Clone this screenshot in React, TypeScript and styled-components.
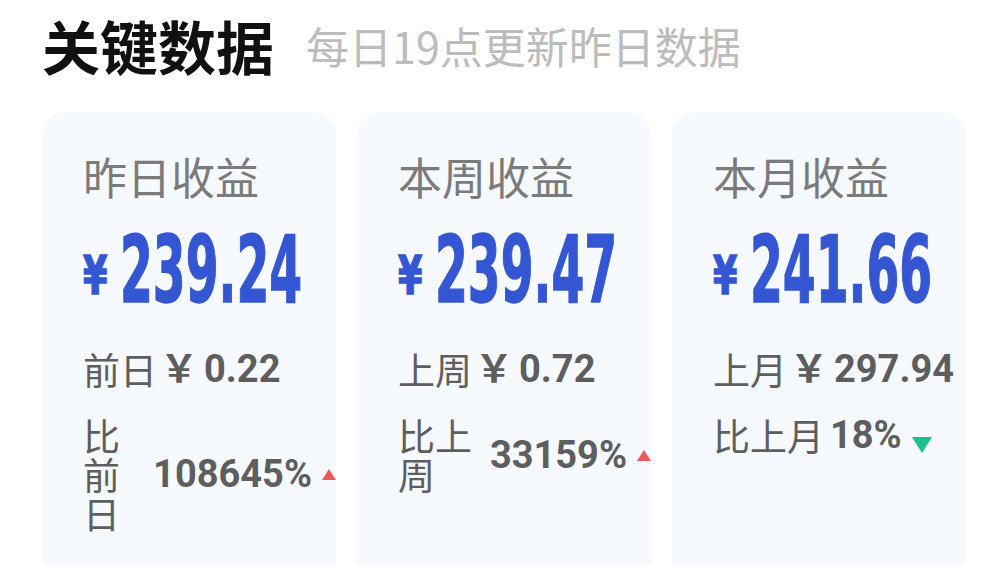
import React from 'react';
import styled, { createGlobalStyle } from 'styled-components';

const GlobalStyle = createGlobalStyle`
    html, body {
        margin: 0;
        padding: 0;
        background: #ffffff;
        overflow: hidden;
    }
    body {
        font-family: Roboto, "Noto Sans CJK SC", sans-serif;
    }
`;

const Page = styled.div`
    width: 1008px;
    height: 565px;
    padding: 10px 42px 0 42px;
    box-sizing: border-box;
    overflow: hidden;
`;

// Header
const Header = styled.div`
    display: flex;
    align-items: center;
    height: 70px;
    gap: 32px;
`;

const Title = styled.h1`
    margin: 0;
    font-family: "Noto Sans CJK SC", sans-serif;
    font-size: 58px;
    font-weight: 700;
    color: #111111;
    line-height: 70px;
`;

const Subtitle = styled.span`
    font-family: "Noto Sans CJK SC", sans-serif;
    font-size: 43px;
    font-weight: 400;
    color: #bcbcbc;
    line-height: 70px;
`;

// Cards
const CardRow = styled.div`
    display: grid;
    grid-template-columns: repeat(3, 294px);
    gap: 21px;
    margin-top: 32px;
`;

const Card = styled.div`
    height: 520px;
    background: #f6f9fe;
    border-radius: 24px;
    padding: 38px 0 0 41px;
    box-sizing: border-box;
`;

const CardTitle = styled.div`
    font-family: "Noto Sans CJK SC", sans-serif;
    font-size: 44px;
    line-height: 52px;
    color: #7b7b7b;
`;

const Amount = styled.div`
    margin-top: 23px;
    height: 92px;
    line-height: 92px;
    white-space: nowrap;
    color: #3556d2;
    font-family: "DejaVu Sans Condensed", "DejaVu Sans", sans-serif;
    font-weight: 700;
    -webkit-text-stroke: 1.4px #3556d2;
`;

const Yen = styled.span`
    display: inline-block;
    width: 26px;
    font-size: 54px;
    vertical-align: 8px;
    margin-right: 11px;
    transform: scaleX(0.72);
    transform-origin: left center;
`;

const Digits = styled.span`
    display: inline-block;
    font-size: 92px;
    transform: scaleX(0.57);
    transform-origin: left center;
`;

const PrevLine = styled.div`
    margin-top: 30px;
    display: flex;
    align-items: center;
    height: 44px;
    color: #5e5e5e;
    white-space: nowrap;
`;

const PrevLabel = styled.span`
    font-family: "Noto Sans CJK SC", sans-serif;
    font-size: 37px;
    line-height: 44px;
`;

const Bold = styled.b`
    margin-left: 3px;
    font-family: Roboto, "Noto Sans CJK SC", sans-serif;
    font-weight: 700;
    font-size: 38px;
    line-height: 44px;
`;

const YenMark = styled.span`
    margin-right: 6px;
`;

const CompareLine = styled.div`
    margin-top: 25px;
    display: flex;
    align-items: center;
    color: #5e5e5e;
`;

const CompareLabel = styled.span`
    flex: 0 1 auto;
    min-width: 0;
    font-family: "Noto Sans CJK SC", sans-serif;
    font-size: 37px;
    line-height: 39px;
`;

const CompareValue = styled.span`
    flex: 0 0 auto;
    margin-left: 6px;
    font-family: Roboto, sans-serif;
    font-weight: 700;
    font-size: 38px;
    line-height: 39px;
`;

const Arrow = styled.span<{ up: boolean }>`
    flex: 0 0 auto;
    width: 0;
    height: 0;
    margin-left: 10px;
    align-self: ${({ up }) => (up ? 'center' : 'flex-end')};
    margin-bottom: ${({ up }) => (up ? '0' : '2px')};
    border-left: ${({ up }) => (up ? '7px' : '10px')} solid transparent;
    border-right: ${({ up }) => (up ? '7px' : '10px')} solid transparent;
    ${({ up }) =>
        up
            ? 'border-bottom: 11px solid #e85a5a;'
            : 'border-top: 16px solid #1dbf8d;'}
`;

const cards = [
    { title: '昨日收益', amount: '239.24', prevLabel: '前日', prev: '0.22', cmpLabel: '比前日', cmp: '108645%', up: true },
    { title: '本周收益', amount: '239.47', prevLabel: '上周', prev: '0.72', cmpLabel: '比上周', cmp: '33159%', up: true },
    { title: '本月收益', amount: '241.66', prevLabel: '上月', prev: '297.94', cmpLabel: '比上月', cmp: '18%', up: false },
];

const App: React.FC = () => {
    return (
        <>
            <GlobalStyle />
            <Page>
                <Header>
                    <Title>关键数据</Title>
                    <Subtitle>每日19点更新昨日数据</Subtitle>
                </Header>
                <CardRow>
                    {cards.map((c, i) => (
                        <Card key={i}>
                            <CardTitle>{c.title}</CardTitle>
                            <Amount>
                                <Yen>¥</Yen>
                                <Digits>{c.amount}</Digits>
                            </Amount>
                            <PrevLine>
                                <PrevLabel>{c.prevLabel}</PrevLabel>
                                <Bold>
                                    <YenMark>￥</YenMark>
                                    {c.prev}
                                </Bold>
                            </PrevLine>
                            <CompareLine>
                                <CompareLabel>{c.cmpLabel}</CompareLabel>
                                <CompareValue>{c.cmp}</CompareValue>
                                <Arrow up={c.up} />
                            </CompareLine>
                        </Card>
                    ))}
                </CardRow>
            </Page>
        </>
    );
};

export default App;
